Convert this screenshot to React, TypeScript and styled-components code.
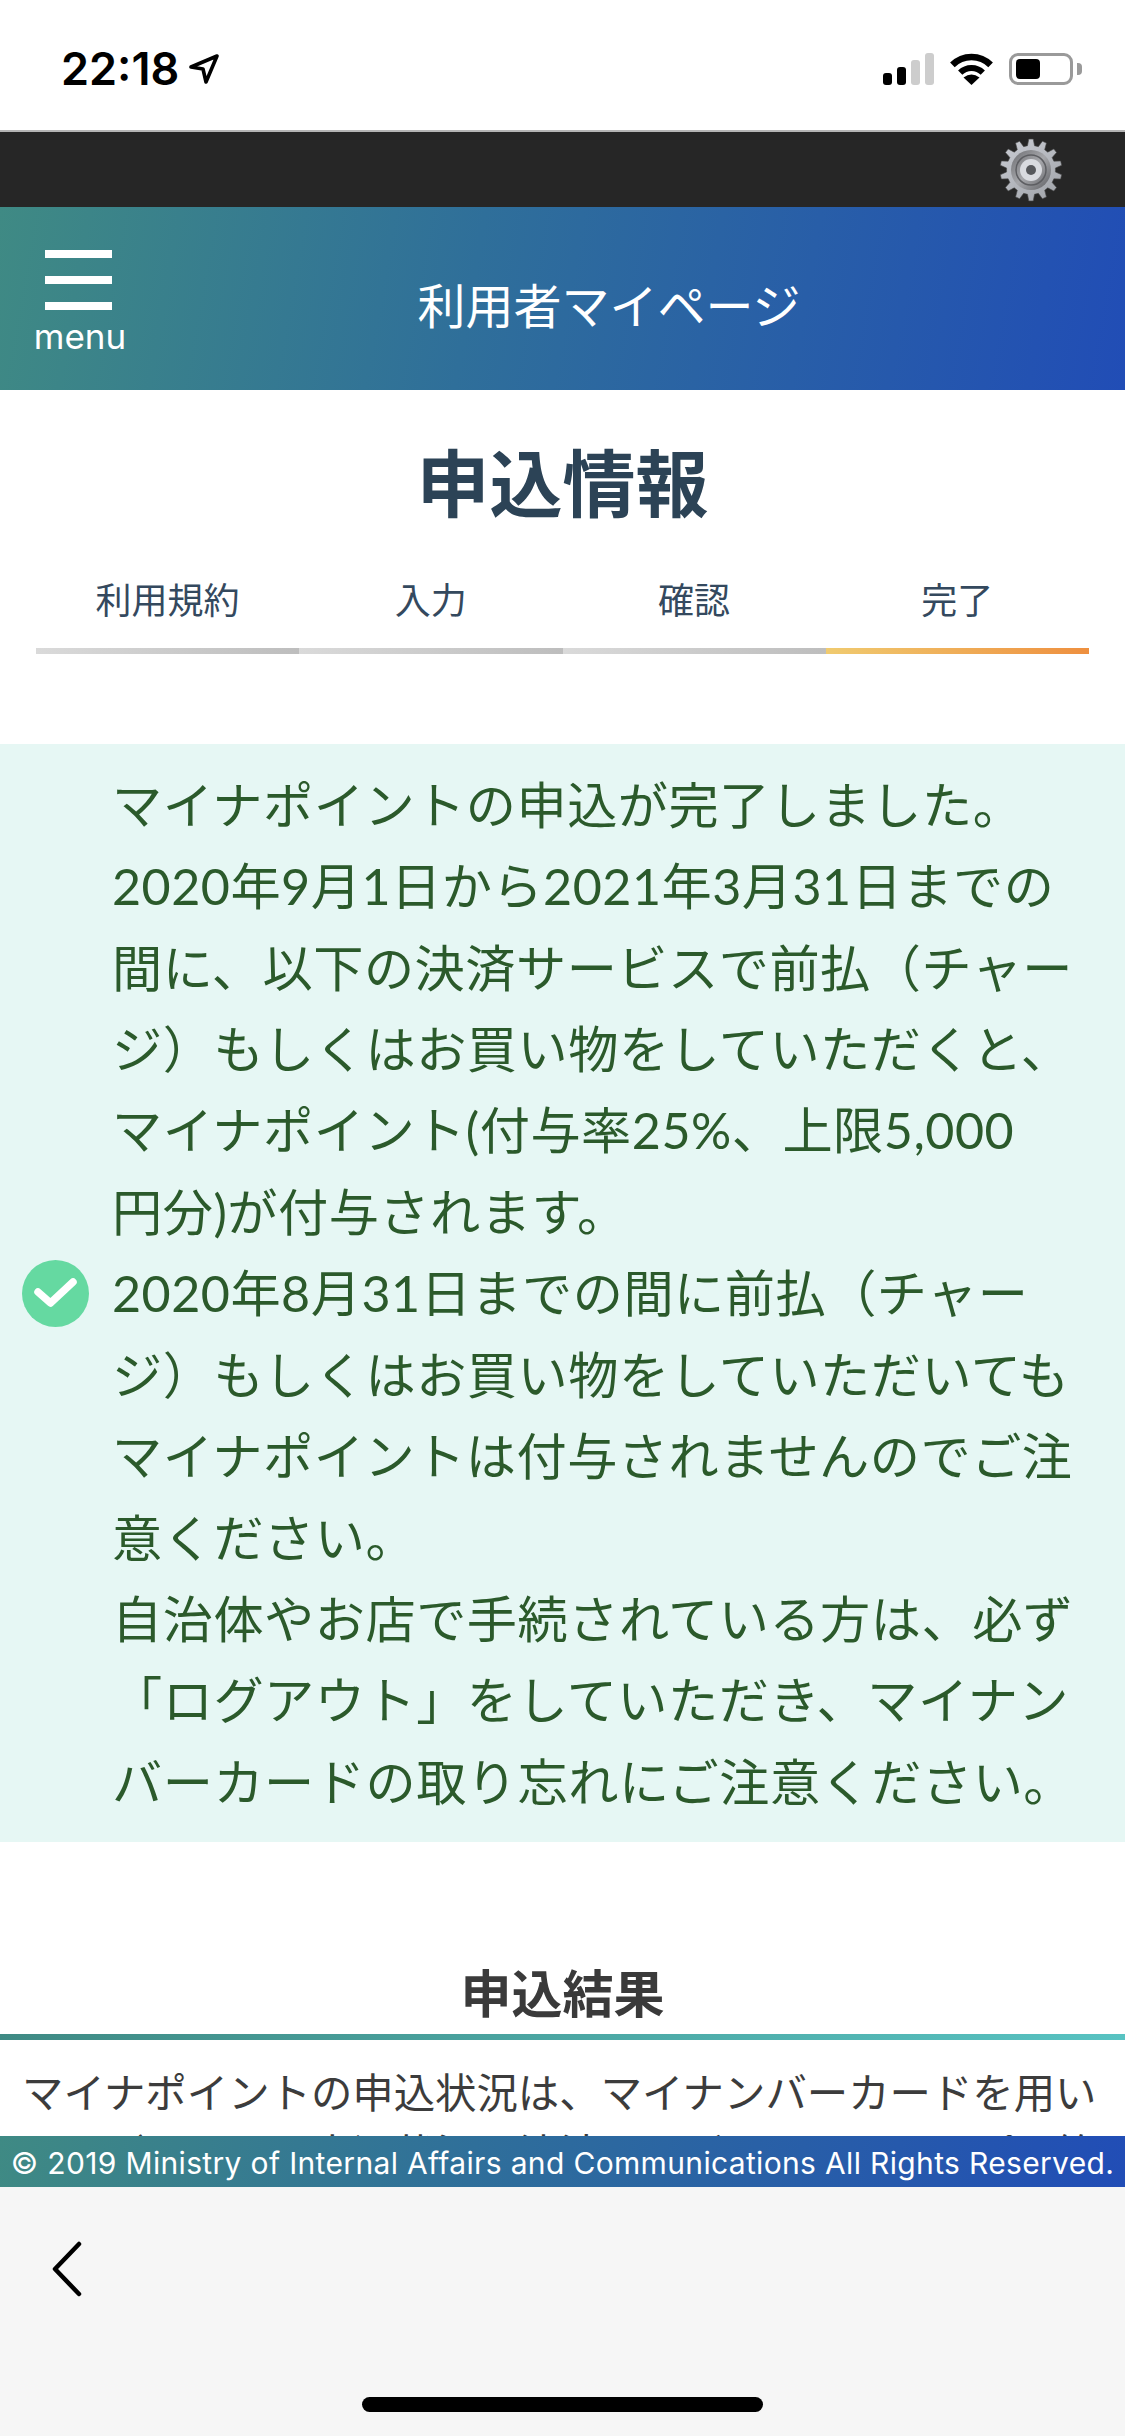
import React from "react";
import styled, { createGlobalStyle } from "styled-components";

const GRADIENT = "linear-gradient(100deg, #3f8a84 0%, #2f6f9a 42%, #214db6 100%)";
const JP = `"Noto Sans CJK JP", "Noto Sans", sans-serif`;

const Global = createGlobalStyle`
  html, body { margin: 0; padding: 0; background: #fff; }
  * { box-sizing: border-box; }
`;

const Page = styled.div`
  width: 1125px;
  height: 2436px;
  display: flex;
  flex-direction: column;
  overflow: hidden;
  background: #fff;
  font-family: ${JP};
`;

const StatusBar = styled.div`
  height: 132px;
  flex: none;
  display: flex;
  align-items: flex-start;
  justify-content: space-between;
  padding: 53px 52px 0 61px;
  border-bottom: 2px solid #b4b4b4;
`;

const TimeGroup = styled.div`
  display: flex;
  align-items: center;
  gap: 10px;
  height: 32px;
`;

const Time = styled.span`
  font-family: Inter, "Liberation Sans", sans-serif;
  font-size: 45px;
  font-weight: 600;
  line-height: 32px;
  color: #000;
`;

const StatusIcons = styled.div`
  display: flex;
  align-items: center;
  gap: 15px;
  height: 32px;
`;

const Signal = styled.div`
  display: flex;
  align-items: flex-end;
  gap: 5px;
  height: 32px;
`;

const SignalBar = styled.i<{ $h: number; $on: boolean }>`
  display: block;
  width: 9px;
  height: ${(p) => p.$h}px;
  border-radius: 3px;
  background: ${(p) => (p.$on ? "#000" : "#cdcdcd")};
`;

const Battery = styled.div`
  width: 64px;
  height: 32px;
  border: 3px solid #9a9a9a;
  border-radius: 9px;
  padding: 3px 4px;
  position: relative;
  &::after {
    content: "";
    position: absolute;
    right: -12px;
    top: 7px;
    width: 5px;
    height: 12px;
    border-radius: 0 4px 4px 0;
    background: #9a9a9a;
  }
`;

const BatteryFill = styled.div`
  width: 24px;
  height: 100%;
  background: #000;
  border-radius: 4px;
`;

const DarkBar = styled.div`
  height: 75px;
  flex: none;
  display: flex;
  align-items: center;
  justify-content: flex-end;
  padding-right: 62px;
  background: #262626;
`;

const Header = styled.header`
  height: 183px;
  flex: none;
  display: grid;
  grid-template-columns: 160px 1fr 67px;
  align-items: center;
  background: ${GRADIENT};
`;

const MenuButton = styled.div`
  display: flex;
  flex-direction: column;
  align-items: center;
  padding-top: 10px;
`;

const MenuBars = styled.div`
  display: flex;
  flex-direction: column;
  gap: 18px;
  width: 67px;
  margin: -2px 3px 0 0;
`;

const MenuBar = styled.i`
  display: block;
  height: 8px;
  background: #fff;
`;

const MenuLabel = styled.span`
  font-family: Inter, "Liberation Sans", sans-serif;
  font-size: 35px;
  font-weight: 400;
  line-height: 40px;
  margin-top: 6px;
  color: #fff;
`;

const HeaderTitle = styled.div`
  font-size: 48px;
  line-height: 60px;
  color: #fff;
  text-align: center;
  margin-top: 9px;
`;

const Main = styled.main`
  flex: 1;
  min-height: 0;
  overflow: hidden;
`;

const PageTitle = styled.h1`
  margin: 0;
  padding-top: 39px;
  font-size: 73px;
  line-height: 100px;
  font-weight: 700;
  color: #2c4356;
  text-align: center;
`;

const Steps = styled.div`
  display: grid;
  grid-template-columns: repeat(4, 1fr);
  margin: 44px 36px 0;
`;

const Step = styled.div<{ $active?: boolean }>`
  height: 81px;
  font-size: 36px;
  line-height: 50px;
  color: #34495e;
  text-align: center;
  border-bottom: 6px solid transparent;
  border-image: linear-gradient(
      to right,
      ${(p) => (p.$active ? "#f0cb70, #ee8f3f" : "#dadada, #bdbdbd")}
    )
    1;
`;

const Notice = styled.section`
  margin-top: 90px;
  height: 1098px;
  display: flex;
  align-items: center;
  background: #e6f7f4;
`;

const NoticeIcon = styled.svg`
  flex: none;
  width: 67px;
  height: 67px;
  margin: 0 23px 0 22px;
`;

const NoticeText = styled.div`
  font-family: Lato, ${JP};
  font-size: 50.2px;
  letter-spacing: 0.5px;
  line-height: 81.4px;
  color: #2b5a2b;
`;

const TextLine = styled.span`
  display: block;
  white-space: nowrap;
`;

const SectionTitle = styled.h2`
  margin: 114px 0 0;
  font-size: 51px;
  line-height: 70px;
  font-weight: 700;
  color: #3a3a3a;
  text-align: center;
`;

const SectionRule = styled.div`
  height: 6px;
  margin-top: 8px;
  background: linear-gradient(to right, #3f8a84, #58c3c2);
`;

const SectionBody = styled.div`
  padding: 20px 0 0 22px;
  font-size: 41.4px;
  line-height: 61px;
  color: #3c3c3c;
`;

const Footer = styled.footer`
  height: 51px;
  flex: none;
  display: flex;
  align-items: center;
  justify-content: center;
  padding-top: 3px;
  background: ${GRADIENT};
  font-family: Inter, "Liberation Sans", sans-serif;
  font-size: 30px;
  line-height: 48px;
  letter-spacing: 0.34px;
  color: #fff;
  white-space: nowrap;
`;

const Toolbar = styled.nav`
  height: 249px;
  flex: none;
  display: flex;
  flex-direction: column;
  justify-content: space-between;
  background: #f6f6f6;
  padding: 54px 0 24px 50px;
`;

const BackIcon = styled.svg`
  display: block;
  width: 34px;
  height: 56px;
`;

const HomeBar = styled.div`
  width: 401px;
  height: 15px;
  margin-left: 312px;
  border-radius: 8px;
  background: #000;
`;

function gearPath(cx: number, cy: number, outer: number, root: number, teeth: number) {
  const pts: string[] = [];
  const step = (Math.PI * 2) / teeth;
  for (let i = 0; i < teeth; i++) {
    const a = i * step - Math.PI / 2;
    const p = (r: number, d: number) =>
      `${(cx + r * Math.cos(a + d * step)).toFixed(2)} ${(cy + r * Math.sin(a + d * step)).toFixed(2)}`;
    pts.push(p(root, -0.32), p(outer, -0.16), p(outer, 0.16), p(root, 0.32));
  }
  return `M${pts.join("L")}Z`;
}

const GearIcon = () => (
  <svg width="64" height="64" viewBox="0 0 64 64">
    <defs>
      <linearGradient id="gearBody" x1="0.1" y1="0" x2="0.8" y2="1">
        <stop offset="0" stopColor="#c9ccd3" />
        <stop offset="1" stopColor="#a2a5ab" />
      </linearGradient>
      <linearGradient id="gearRing" x1="0" y1="0" x2="1" y2="1">
        <stop offset="0" stopColor="#6d6e72" />
        <stop offset="0.5" stopColor="#a6a7ab" />
        <stop offset="1" stopColor="#5e5f63" />
      </linearGradient>
    </defs>
    <path d={gearPath(32, 32, 31, 24.5, 14)} fill="url(#gearBody)" stroke="#4a4a4a" strokeWidth="0.6" />
    <circle cx="32" cy="32" r="20" fill="url(#gearRing)" />
    <circle cx="32" cy="32" r="15" fill="none" stroke="#5d5e62" strokeWidth="1.5" />
    <circle cx="32" cy="32" r="11" fill="#d9dbe0" />
    <circle cx="32" cy="32" r="5" fill="#56585c" />
  </svg>
);

const NOTICE_LINES = [
  "マイナポイントの申込が完了しました。",
  "2020年9月1日から2021年3月31日までの",
  "間に、以下の決済サービスで前払（チャー",
  "ジ）もしくはお買い物をしていただくと、",
  "マイナポイント(付与率25%、上限5,000",
  "円分)が付与されます。",
  "2020年8月31日までの間に前払（チャー",
  "ジ）もしくはお買い物をしていただいても",
  "マイナポイントは付与されませんのでご注",
  "意ください。",
  "自治体やお店で手続されている方は、必ず",
  "「ログアウト」をしていただき、マイナン",
  "バーカードの取り忘れにご注意ください。",
];

const STEPS = ["利用規約", "入力", "確認", "完了"];

export default function App() {
  return (
    <Page>
      <Global />
      <StatusBar>
        <TimeGroup>
          <Time>22:18</Time>
          <svg width="30" height="30" viewBox="0 0 30 30" fill="none">
            <path d="M2 13 L28 2 L17 28 L14 15 Z" stroke="#000" strokeWidth="3.6" strokeLinejoin="round" />
          </svg>
        </TimeGroup>
        <StatusIcons>
          <Signal>
            <SignalBar $h={12} $on />
            <SignalBar $h={18} $on />
            <SignalBar $h={25} $on={false} />
            <SignalBar $h={32} $on={false} />
          </Signal>
          <svg width="45" height="32" viewBox="0 0 45 32" fill="none">
            <path d="M3.4 11.9 A27 27 0 0 1 41.6 11.9" stroke="#000" strokeWidth="6.5" />
            <path d="M11.2 19.7 A16 16 0 0 1 33.8 19.7" stroke="#000" strokeWidth="6" />
            <path d="M22.5 32 L14.5 24.5 Q22.5 18.5 30.5 24.5 Z" fill="#000" />
          </svg>
          <Battery>
            <BatteryFill />
          </Battery>
        </StatusIcons>
      </StatusBar>
      <DarkBar>
        <GearIcon />
      </DarkBar>
      <Header>
        <MenuButton>
          <MenuBars>
            <MenuBar />
            <MenuBar />
            <MenuBar />
          </MenuBars>
          <MenuLabel>menu</MenuLabel>
        </MenuButton>
        <HeaderTitle>利用者マイページ</HeaderTitle>
      </Header>
      <Main>
        <PageTitle>申込情報</PageTitle>
        <Steps>
          {STEPS.map((s, i) => (
            <Step key={s} $active={i === 3}>
              {s}
            </Step>
          ))}
        </Steps>
        <Notice>
          <NoticeIcon viewBox="0 0 67 67">
            <circle cx="33.5" cy="33.5" r="33.5" fill="#65d9a1" />
            <path d="M16 32 L28.5 43 L51 22" fill="none" stroke="#fff" strokeWidth="7.5" strokeLinecap="round" strokeLinejoin="round" />
          </NoticeIcon>
          <NoticeText>
            {NOTICE_LINES.map((l) => (
              <TextLine key={l}>{l}</TextLine>
            ))}
          </NoticeText>
        </Notice>
        <SectionTitle>申込結果</SectionTitle>
        <SectionRule />
        <SectionBody>
          <TextLine>マイナポイントの申込状況は、マイナンバーカードを用い</TextLine>
          <TextLine>てログインし、申込状況、決済サービス、マイナアプリ等から確</TextLine>
        </SectionBody>
      </Main>
      <Footer>© 2019 Ministry of Internal Affairs and Communications All Rights Reserved.</Footer>
      <Toolbar>
        <BackIcon viewBox="0 0 34 56" fill="none">
          <path d="M29 3 L5 28 L29 53" stroke="#000" strokeWidth="4.5" strokeLinecap="round" strokeLinejoin="round" />
        </BackIcon>
        <HomeBar />
      </Toolbar>
    </Page>
  );
}
